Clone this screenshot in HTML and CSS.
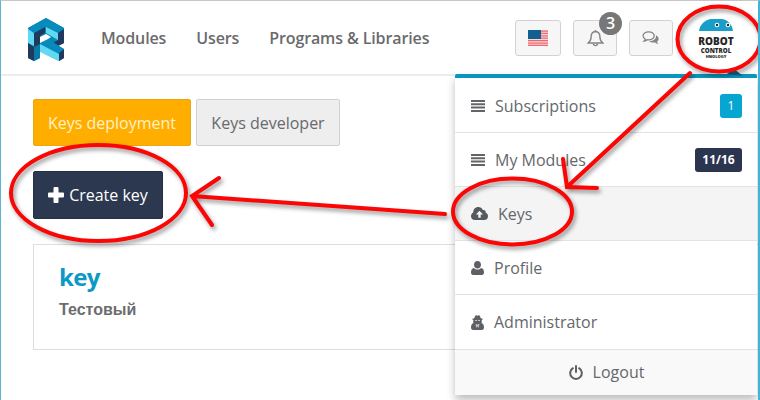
FILE: index.html
```html
<!DOCTYPE html>
<html lang="en">
<head>
<meta charset="utf-8">
<title>Keys</title>
<link rel="stylesheet" href="styles.css">
</head>
<body>
<div class="page">
  <header class="header">
    <svg class="logo" viewBox="0 0 38 44" width="38" height="44">
      <path fill="#0789b8" d="M1 10 19 0l18 10v15l-6 3 6 3v9l-5 3-14-7-5-3v7l-6 3-6-3z"/>
      <path fill="#62d9f2" d="M1 11l6 4v13l-6-3zM19 9l12 6v7l-12-7zM13 26l19 10v7l-19-9z"/>
      <path fill="#20395d" d="M7 15l11-6v6l-5 3v9l-6 3zM31 15l6-4v14l-6 3-5-3 5-3zM1 25l6 4v14l-6-3zM32 35l5-4v9l-5 3z"/>
      <path fill="#078bbd" d="M1 10 19 0l18 10-6 4-12-6-12 7zM14 25l7-4 16 10-5 4z"/>
      <path fill="#0878a7" d="M7 29l6-3v14l-6 3z"/>
      <path fill="#fff" d="M13 19l6-3 5 3-3 2-8 4z"/>
    </svg>
    <nav class="nav">
      <a>Modules</a>
      <a>Users</a>
      <a>Programs &amp; Libraries</a>
    </nav>
    <div class="tools">
      <span class="tool tool-flag">
        <svg width="20" height="16" viewBox="0 0 20 16">
          <path fill="#f7d9db" d="M0 0h20v16H0z"/>
          <path stroke="#ef6870" stroke-width="1.25" d="M0 1h20M0 3.400h20M0 5.800h20M0 8.200h20M0 10.600h20M0 13h20M0 15.400h20"/>
          <path fill="#12608f" d="M0 0h13v9H0z"/>
        </svg>
      </span>
      <span class="tool tool-bell">
        <svg width="17" height="18" viewBox="0 0 17 18" fill="none" stroke="#858585" stroke-width="1.400">
          <path d="M8.500 1v1.500C5 2.700 4.100 5 4.100 8c0 3-1.200 4.600-3 6h14.800c-1.800-1.400-3-3-3-6 0-3-.9-5.300-4.400-5.500"/>
          <path d="M6.300 14.500c.3 2.800 4.100 2.800 4.400 0"/>
        </svg>
        <span class="count">3</span>
      </span>
      <span class="tool tool-chat">
        <svg width="18" height="14" viewBox="0 0 19 15">
          <path fill="#858585" d="M14.800 4.500c3.600 1.900 3.700 5.200 1.200 6.900.2 1 .9 1.800 1.500 2.400-1.500-.1-2.700-.7-3.500-1.500-2.800.4-5-.1-6.400-1.500 4.400.1 7.900-2.400 7.200-6.300z"/>
          <path fill="#f6f6f6" stroke="#858585" stroke-width="1.400" d="M7 1C3.500 1 1 2.900 1 5.200c0 1.500 1 2.800 2.500 3.600-.2.800-.7 1.300-1.300 1.900 1.400-.2 2.500-.7 3.200-1.400C9.700 9.900 13 8 13 5.200 13 2.900 10.500 1 7 1z"/>
        </svg>
      </span>
    </div>
    <div class="avatar">
      <svg class="robot" width="34" height="13" viewBox="0 0 34 13">
        <path fill="#189ec9" d="M0 12C1 5 6 1 12 0h11c6 1 10 5 11 12z"/>
        <circle cx="18" cy="6" r="2.300" fill="#fff"/><circle cx="18" cy="6" r="1.200" fill="#222"/>
        <circle cx="29" cy="6" r="2.300" fill="#fff"/><circle cx="29" cy="6" r="1.200" fill="#222"/>
      </svg>
      <span class="av-robot">ROBOT</span>
      <span class="av-control">CONTROL</span>
      <span class="av-tech">HNOLOGY</span>
    </div>
  </header>
  <main class="main">
    <div class="tabs">
      <button class="btn btn-orange"><span>Keys deployment</span></button>
      <button class="btn btn-gray"><span>Keys developer</span></button>
    </div>
    <button class="btn btn-dark">
      <svg width="16" height="16" viewBox="0 0 16 16"><path fill="#fff" d="M5.500 1q0-1 1-1h3q1 0 1 1v4.500H15q1 0 1 1v3q0 1-1 1h-4.500V15q0 1-1 1h-3q-1 0-1-1v-4.500H1q-1 0-1-1v-3q0-1 1-1h4.500z"/></svg>
      <span>Create key</span>
    </button>
    <section class="card">
      <h2>key</h2>
      <p>Тестовый</p>
    </section>
  </main>
  <div class="menu">
    <div class="item low">
      <svg width="14" height="12" viewBox="0 0 14 12"><path stroke="#626468" stroke-width="2" d="M0 1h14M0 4.300h14M0 7.600h14M0 11h14"/></svg>
      <span class="label">Subscriptions</span><span class="tag tag-blue">1</span>
    </div>
    <div class="item low">
      <svg width="14" height="12" viewBox="0 0 14 12"><path stroke="#626468" stroke-width="2" d="M0 1h14M0 4.300h14M0 7.600h14M0 11h14"/></svg>
      <span class="label">My Modules</span><span class="tag tag-dark">11/16</span>
    </div>
    <div class="item active">
      <svg width="17" height="13" viewBox="0 0 17 13"><path fill="#55585c" d="M4 13C1.500 13 0 11.400 0 9.200c0-1.700.9-3 2.300-3.600C2.100 2.400 4.300 0 7.200 0c2.200 0 3.900 1.200 4.600 3 1.800-.5 3.300.9 2.900 2.700 1.400.5 2.300 1.800 2.300 3.500 0 2.200-1.500 3.800-3.700 3.800z"/><path fill="#f4f4f4" d="M8.500 3.700l3.600 3.800H9.700v3.200H7.300V7.500H4.900z"/></svg>
      <span class="label">Keys</span>
    </div>
    <div class="item">
      <svg width="13" height="14" viewBox="0 0 13 14"><path fill="#5e6064" d="M6.500 0C8.600 0 10 1.500 10 3.700S8.600 7.600 6.500 7.600 3 5.900 3 3.700 4.400 0 6.500 0zM3 6.900c2 2 5 2 7 0 2.200.3 3 2 3 4.700 0 1.500-.8 2.400-2 2.400H2c-1.200 0-2-.9-2-2.400C0 8.900.8 7.200 3 6.900z"/></svg>
      <span class="label">Profile</span>
    </div>
    <div class="item tall">
      <svg width="13" height="15" viewBox="0 0 13 15"><path fill="#5e6064" d="M3.500 3 4 .8Q5 0 6.500.7 8 0 9 .8L9.500 3l2 .7v1l-1 .6c.6 1.200.4 2-.1 2.700C12 8.500 13 10 13 12.600c0 1.500-.8 2.400-2 2.400H2c-1.200 0-2-.9-2-2.400C0 10 1 8.500 2.600 8c-.5-.7-.7-1.500-.1-2.700l-1-.6v-1z"/><path fill="#c4c5c6" d="M4 5h2v1H4zM7 5h2v1H7zM4.500 9h1.200l.8 1 .8-1h1.200l-1 4-1-1.800-1 1.800z"/></svg>
      <span class="label">Administrator</span>
    </div>
    <div class="item logout">
      <svg width="14" height="15" viewBox="0 0 14 15" fill="none" stroke="#5e6064" stroke-width="2" stroke-linecap="round"><path d="M3.900 3.200a5.800 5.800 0 1 0 6.200 0M7 1v6"/></svg>
      <span class="label">Logout</span>
    </div>
  </div>
  <svg class="marks" width="760" height="400" viewBox="0 0 760 400">
    <path fill="#17648c" d="M727 74l6-6 10 8z"/>
    <g fill="none" stroke="#fb0505" stroke-width="4" stroke-linecap="round">
      <ellipse cx="719" cy="39" rx="41.500" ry="32.500"/>
      <ellipse cx="98.500" cy="193" rx="87.500" ry="48"/>
      <ellipse cx="512.500" cy="211.500" rx="59.500" ry="33"/>
      <path d="M690 73 567 187M563 159l4 28 30 1M445 214 192 196M219 178l-27 18 20 29"/>
    </g>
  </svg>
</div>
</body>
</html>
```
FILE: styles.css
```css
* { box-sizing: border-box; }
body { margin: 0; font-family: "Open Sans", sans-serif; color: #65676b; }
.page {
  position: relative; width: 760px; height: 400px; overflow: hidden; background: #fff;
  border-top: 1px solid #c6c6c6; border-left: 1px solid #5fb4cf; border-right: 2px solid #43b4d6;
}
.header { display: flex; height: 75px; border-bottom: 2px solid #ededed; }
.logo { margin: 17px 0 0 26px; flex: none; }
.nav { display: flex; width: 450px; flex: none; padding: 26px 0 0 36px; gap: 30px; font-size: 16px; line-height: 22px; font-weight: 600; white-space: nowrap; letter-spacing: -0.12px; color: #6a6a6d; }
.tools { display: flex; gap: 12px; padding-top: 19px; flex: none; }
.tool { position: relative; display: flex; align-items: center; justify-content: center; height: 36px; width: 44px; background: #f6f6f6; border: 1px solid #d2d2d2; border-radius: 3px; }
.tool-flag { width: 46px; }
.count { position: absolute; left: 25px; top: -9px; width: 23px; height: 23px; border-radius: 50%; background: #777; color: #fff; font-size: 16px; line-height: 22px; font-weight: 600; text-align: center; }
.avatar { display: flex; flex-direction: column; align-items: center; width: 86px; flex: none; padding-top: 18px; color: #262626; font-weight: 800; white-space: nowrap; }
.robot { flex: none; }
.av-robot { font-size: 10px; line-height: 11px; margin-top: 4px; }
.av-control { font-size: 6.200px; line-height: 7px; }
.av-tech { font-size: 4px; line-height: 5px; }
.main { padding: 23px 0 0 32px; }
.tabs { display: flex; gap: 5px; }
.btn { display: flex; align-items: center; justify-content: center; padding: 0; font: 16px/22px "Open Sans", sans-serif; border: 1px solid; border-radius: 2px; height: 47px; white-space: nowrap; }
.btn-orange { width: 158px; background: #ffae00; border-color: #eaa713; color: #fff2c7; }
.btn-gray { width: 144px; background: #eee; border-color: #d0d0d0; color: #67696d; }
.btn-dark { width: 130px; height: 48px; margin-top: 25px; gap: 5px; background: #2c3850; border-color: #242f46; color: #fff; }
.card { margin-top: 25px; width: 740px; height: 106px; border: 1px solid #dcdfdf; padding: 15px 25px; }
.card h2 { margin: 0; font-size: 24px; line-height: 34px; font-weight: 700; letter-spacing: -0.7px; color: #0b99c5; }
.card p { margin: 6px 0 0; font: bold 16px/20px "Liberation Sans", sans-serif; color: #6b6c6f; }
.menu { position: absolute; left: 454px; top: 73px; width: 302px; background: #fff; border-top: 4px solid #0796be; border-radius: 2px 2px 0 0; box-shadow: 0 5px 8px rgba(0,0,0,.26); }
.item { display: flex; align-items: center; height: 54px; padding: 0 15px 0 16px; border-bottom: 1px solid #e3e3e3; font-size: 16px; line-height: 22px; }
.item.tall { height: 55px; }
.item.low { height: 54.500px; padding-top: 2px; }
.label { margin-left: 10px; white-space: nowrap; }
.item.active { background: #f4f4f4; }
.tag { margin-left: auto; height: 24px; border-radius: 3px; color: #fff; text-align: center; font-size: 12px; line-height: 24px; }
.tag-blue { width: 22px; background: #07a5d2; }
.tag-dark { width: 47px; background: #2b3550; font-weight: 700; }
.item.logout { height: 45px; padding-bottom: 1px; border: 0; justify-content: center; background: #f9f9f9; }
.marks { position: absolute; left: -1px; top: -1px; pointer-events: none; }
.marks g { filter: drop-shadow(2px 3px 2px rgba(0,0,0,.4)); }
```
